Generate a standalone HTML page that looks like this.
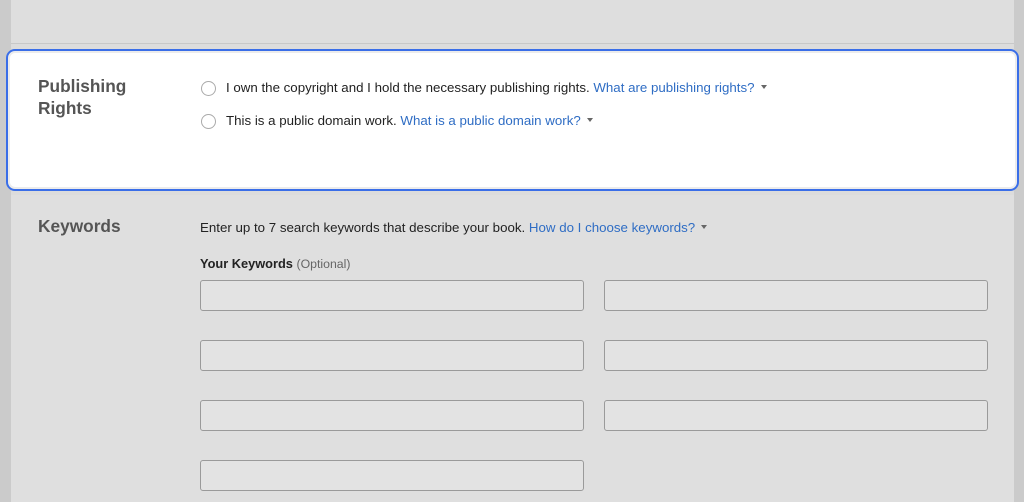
<!DOCTYPE html>
<html><head><meta charset="utf-8"><style>
*{margin:0;padding:0;box-sizing:border-box}
body{width:1024px;height:502px;overflow:hidden;background:#dcdcdc;font-family:"Liberation Sans",Arial,sans-serif;position:relative}
.strip{position:absolute;top:0;bottom:0;width:11px;background:#cbcbcb}
.top{position:absolute;left:11px;right:10px;top:0;height:44px;background:#dedede;border-bottom:1px solid #c8c8c8}
.card{position:absolute;left:6px;top:49px;width:1013px;height:142px;border:2px solid #3a6ee8;border-radius:9px;background:#fff;box-shadow:inset 0 0 0 2px #ececec}
.kw{position:absolute;left:11px;right:10px;top:195px;bottom:0;background:#dfdfdf}
h2{position:absolute;font-size:17.3px;font-weight:bold;color:#555;line-height:22px}
.t{position:absolute;font-size:13.3px;color:#222;white-space:nowrap}
a{color:#2f6dc4;text-decoration:none}
.car{display:inline-block;width:0;height:0;border-left:3.5px solid transparent;border-right:3.5px solid transparent;border-top:4px solid #666;vertical-align:middle;margin-left:6px;margin-top:-2px}
.radio{position:absolute;width:15px;height:15px;border:1px solid #aaa;border-radius:50%;background:#fff}
.in{position:absolute;width:384px;height:31px;border:1px solid #9a9a9a;border-radius:3px;background:#e3e3e3}
</style></head><body>
<div class="strip" style="left:0"></div><div class="strip" style="right:0;width:10px"></div>
<div class="top"></div>
<div class="card"></div>
<h2 style="left:38px;top:75px">Publishing<br>Rights</h2>
<div class="radio" style="left:201px;top:81px"></div>
<div class="t" style="left:226px;top:80px">I own the copyright and I hold the necessary publishing rights. <a>What are publishing rights?</a><span class="car"></span></div>
<div class="radio" style="left:201px;top:114px"></div>
<div class="t" style="left:226px;top:113px">This is a public domain work. <a>What is a public domain work?</a><span class="car"></span></div>
<div class="kw"></div>
<h2 style="left:38px;top:215px">Keywords</h2>
<div class="t" style="left:200px;top:220px">Enter up to 7 search keywords that describe your book. <a>How do I choose keywords?</a><span class="car"></span></div>
<div class="t" style="left:200px;top:256px;font-size:12.8px"><b>Your Keywords</b> <span style="color:#666;font-size:12.3px">(Optional)</span></div>
<div class="in" style="left:200px;top:280px"></div><div class="in" style="left:604px;top:280px"></div>
<div class="in" style="left:200px;top:340px"></div><div class="in" style="left:604px;top:340px"></div>
<div class="in" style="left:200px;top:400px"></div><div class="in" style="left:604px;top:400px"></div>
<div class="in" style="left:200px;top:460px"></div>
</body></html>
